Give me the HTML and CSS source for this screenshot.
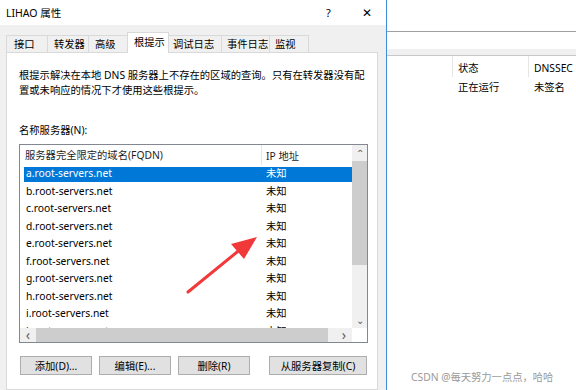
FILE: index.html
```html
<!DOCTYPE html>
<html lang="zh-CN">
<head>
  <meta charset="UTF-8">
  <title>LIHAO 属性</title>
  <link rel="stylesheet" href="styles.css">
</head>
<body>

  <div class="dialog">
    <div class="titlebar">
      <span class="title">LIHAO 属性</span>
      <span class="help">?</span>
      <span class="close">✕</span>
    </div>

    <div class="dialog-body">
      <div class="tabs">
        <div class="tab t1">接口</div>
        <div class="tab t2">转发器</div>
        <div class="tab t3">高级</div>
        <div class="tab active">根提示</div>
        <div class="tab t5">调试日志</div>
        <div class="tab t6">事件日志</div>
        <div class="tab t7">监视</div>
      </div>

      <div class="panel">
        <p class="desc">根提示解决在本地 DNS 服务器上不存在的区域的查询。只有在转发器没有配置或未响应的情况下才使用这些根提示。</p>

        <div class="list-label">名称服务器(N):</div>

        <div class="listbox">
          <div class="list-main">
            <div class="list-cols">
              <div class="list-head">
                <div class="col-name">服务器完全限定的域名(FQDN)</div>
                <div class="col-ip">IP 地址</div>
              </div>
              <div class="rows">
                <div class="row sel"><span class="col-name">a.root-servers.net</span><span class="col-ip">未知</span></div>
                <div class="row"><span class="col-name">b.root-servers.net</span><span class="col-ip">未知</span></div>
                <div class="row"><span class="col-name">c.root-servers.net</span><span class="col-ip">未知</span></div>
                <div class="row"><span class="col-name">d.root-servers.net</span><span class="col-ip">未知</span></div>
                <div class="row"><span class="col-name">e.root-servers.net</span><span class="col-ip">未知</span></div>
                <div class="row"><span class="col-name">f.root-servers.net</span><span class="col-ip">未知</span></div>
                <div class="row"><span class="col-name">g.root-servers.net</span><span class="col-ip">未知</span></div>
                <div class="row"><span class="col-name">h.root-servers.net</span><span class="col-ip">未知</span></div>
                <div class="row"><span class="col-name">i.root-servers.net</span><span class="col-ip">未知</span></div>
                <div class="row"><span class="col-name">j.root-servers.net</span><span class="col-ip">未知</span></div>
              </div>
            </div>
            <div class="vscroll">
              <span class="arrow">&#8963;</span>
              <div class="vtrack"><div class="vthumb"></div></div>
              <span class="arrow">&#8964;</span>
            </div>
          </div>
          <div class="hscroll">
            <span class="harrow">&lsaquo;</span>
            <div class="htrack"><div class="hthumb"></div></div>
            <span class="harrow">&rsaquo;</span>
            <div class="corner"></div>
          </div>
        </div>

        <div class="buttons">
          <button class="btn">添加(D)...</button>
          <button class="btn">编辑(E)...</button>
          <button class="btn">删除(R)</button>
          <button class="btn wide">从服务器复制(C)</button>
        </div>
      </div>
    </div>
  </div>

  <div class="window">
    <div class="win-top"></div>
    <div class="win-band"></div>
    <div class="win-grid">
      <div class="win-head">
        <div class="wc c0"></div>
        <div class="wc c1">状态</div>
        <div class="wc c2">DNSSEC</div>
      </div>
      <div class="win-row">
        <div class="wc c0"></div>
        <div class="wc c1">正在运行</div>
        <div class="wc c2">未签名</div>
      </div>
    </div>
    <div class="watermark">CSDN @每天努力一点点，哈哈</div>
  </div>

  <!-- annotation arrow drawn over the list -->
  <svg class="arrow-mark" width="80" height="64" viewBox="0 0 80 64">
    <line x1="4" y1="58" x2="58" y2="14" stroke="#f2393a" stroke-width="3" stroke-linecap="round"/>
    <polygon points="73,3 47,10 60,25" fill="#f2393a"/>
  </svg>

</body>
</html>
```

FILE: styles.css
```css
* {
  box-sizing: border-box;
}

body {
  margin: 0;
  width: 576px;
  height: 390px;
  overflow: hidden;
  display: flex;
  font-family: "Noto Sans", "Noto Sans CJK SC", sans-serif;
  font-size: 10.3px;
  color: #000;
  background: #fff;
  position: relative;
}

/* ---------- dialog ---------- */

.dialog {
  width: 387px;
  height: 390px;
  display: flex;
  flex-direction: column;
  border-right: 1px solid #3c8fd9;
}

.titlebar {
  height: 25px;
  background: #fff;
  display: flex;
  align-items: center;
  padding-left: 6px;
  font-size: 10.5px;
}

.title {
  flex: 1;
}

.help {
  width: 36px;
  font-size: 11px;
}

.close {
  width: 20px;
  font-size: 12px;
  margin-right: 4px;
}

.dialog-body {
  flex: 1;
  background: #f0f0f0;
  padding: 7px 8px 0 6px;
  display: flex;
  flex-direction: column;
}

.tabs {
  display: flex;
  align-items: flex-end;
  height: 20px;
  position: relative;
  z-index: 1;
}

.tab {
  height: 17px;
  line-height: 16px;
  border: 1px solid #d9d9d9;
  border-bottom: none;
  border-right: none;
  padding-left: 6px;
  background: #f0f0f0;
  white-space: nowrap;
  overflow: hidden;
}

.t1 { width: 41px; padding-left: 7px; }
.t2 { width: 41px; }
.t3 { width: 39px; }
.t5 { width: 52px; border-left: none; padding-left: 4px; }
.t6 { width: 48px; padding-left: 5px; }
.t7 { width: 40px; border-right: 1px solid #d9d9d9; padding-left: 5px; }

.tab.active {
  width: 42px;
  height: 21px;
  line-height: 18px;
  background: #fff;
  margin-bottom: -1px;
  border: 1px solid #d9d9d9;
  border-bottom: none;
  padding-left: 6px;
}

.panel {
  flex: 1;
  background: #fff;
  border: 1px solid #d9d9d9;
  padding: 15px 10px 0 12px;
}

.desc {
  margin: 0;
  line-height: 15px;
  width: 350px;
}

.list-label {
  margin-top: 24px;
  height: 22px;
  line-height: 16px;
}

/* ---------- list view ---------- */

.listbox {
  width: 349px;
  height: 199px;
  border: 1px solid #828790;
  display: flex;
  flex-direction: column;
}

.list-main {
  flex: 1;
  display: flex;
  min-height: 0;
}

.list-cols {
  flex: 1;
  overflow: hidden;
}

.list-head {
  height: 20px;
  display: flex;
  align-items: center;
  color: #1e1e1e;
}

.list-head .col-name {
  padding-left: 5px;
  width: 242px;
  height: 20px;
  line-height: 20px;
  border-right: 1px solid #e5e5e5;
}

.list-head .col-ip {
  padding-left: 4px;
}

.rows {
  padding-left: 4px;
}

.row {
  height: 17.5px;
  line-height: 17.5px;
  display: flex;
}

.row .col-name {
  width: 238px;
  padding-left: 2px;
}

.row .col-ip {
  padding-left: 4px;
}

.row.sel {
  color: #fff;
  background: linear-gradient(#fff 0 2px, #0078d7 2px 17px, #fff 17px);
}

.vscroll {
  width: 15px;
  background: #f0f0f0;
  display: flex;
  flex-direction: column;
  align-items: center;
}

.arrow {
  height: 16px;
  line-height: 16px;
  font-size: 10px;
  color: #606060;
}

.vtrack {
  flex: 1;
  width: 100%;
}

.vthumb {
  height: 104px;
  background: #cdcdcd;
}

.hscroll {
  height: 14px;
  display: flex;
  align-items: center;
  background: #f0f0f0;
}

.harrow {
  width: 16px;
  text-align: center;
  font-size: 14px;
  line-height: 14px;
  color: #606060;
}

.htrack {
  flex: 1;
  height: 14px;
}

.hthumb {
  width: 292px;
  height: 14px;
  background: #cdcdcd;
}

.corner {
  width: 15px;
  height: 14px;
  background: #fff;
}

.buttons {
  display: flex;
  margin-top: 13px;
  padding-left: 1px;
}

.btn {
  height: 19px;
  width: 72px;
  margin-right: 7px;
  padding: 0;
  background: #e1e1e1;
  border: 1px solid #adadad;
  font-family: inherit;
  font-size: 10.3px;
  color: #000;
}

.btn.wide {
  width: 98px;
  margin-left: 12px;
  margin-right: 0;
}

/* ---------- window behind ---------- */

.window {
  flex: 1;
  display: flex;
  flex-direction: column;
  position: relative;
}

.win-top {
  height: 32px;
  border-bottom: 1px solid #a0a0a0;
}

.win-band {
  height: 24px;
  background: linear-gradient(#fff 0 17px, #f0f0f0 17px);
  border-bottom: 1px solid #c8c8c8;
}

.win-head,
.win-row {
  display: flex;
  height: 20px;
  line-height: 20px;
}

.win-head {
  height: 21px;
  line-height: 24px;
}

.wc.c0 { width: 66px; }
.wc.c1 { width: 76px; padding-left: 5px; }
.wc.c2 { padding-left: 5px; white-space: nowrap; }

.win-head .c0,
.win-head .c1 {
  border-right: 1px solid #e5e5e5;
}

.watermark {
  position: absolute;
  left: 24px;
  bottom: 6px;
  color: #9a9a9a;
  font-size: 10.3px;
  white-space: nowrap;
}

.arrow-mark {
  position: absolute;
  left: 184px;
  top: 234px;
}
```
